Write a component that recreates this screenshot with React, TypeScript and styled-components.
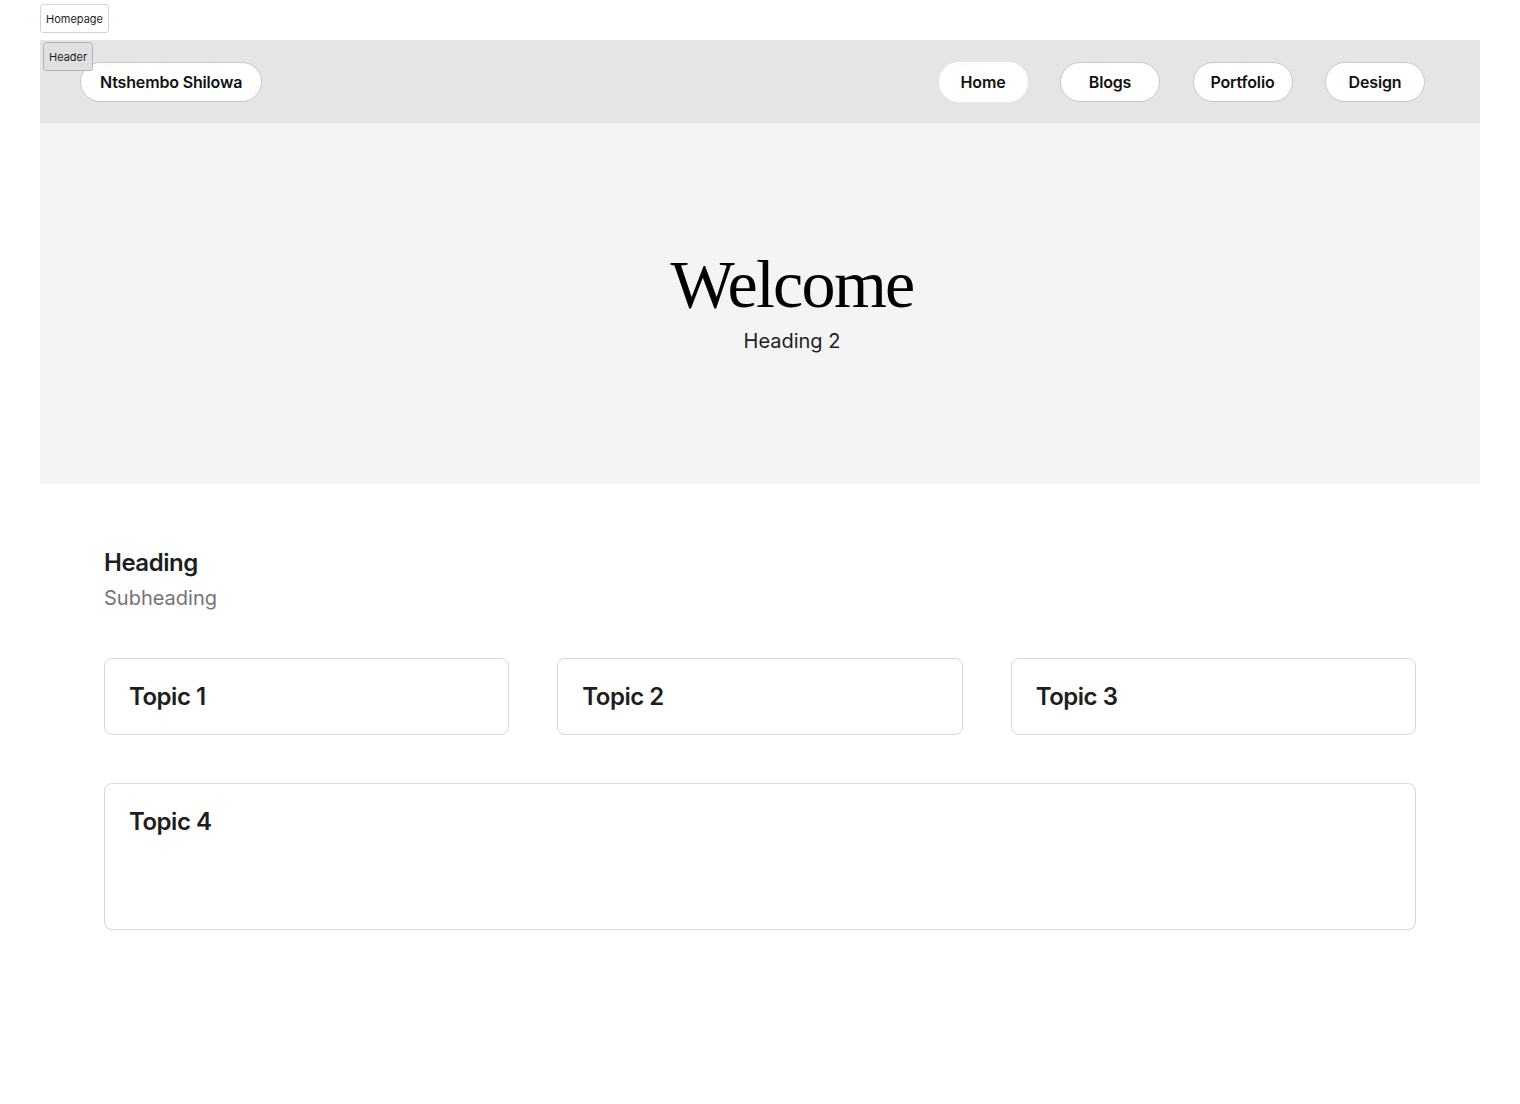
import React from "react";
import styled, { createGlobalStyle } from "styled-components";

const GlobalStyle = createGlobalStyle`
  html, body {
    margin: 0;
    padding: 0;
    background: #ffffff;
    font-family: Inter, "Noto Sans", sans-serif;
    color: #1e1e1e;
  }
`;

const Page = styled.div`
  padding: 4px 40px 40px;
`;

const FrameLabel = styled.div<{ $shaded?: boolean }>`
  display: inline-flex;
  align-items: center;
  height: 27px;
  padding: 0 5px;
  font-size: 11px;
  color: #1e1e1e;
  background: ${(p) => (p.$shaded ? "#e0e0e0" : "#ffffff")};
  border: 1px solid ${(p) => (p.$shaded ? "#b3b3b3" : "#d4d4d4")};
  border-radius: 3px;
`;

const Frame = styled.div`
  margin-top: 7px;
  width: 1440px;
`;

const Header = styled.header`
  position: relative;
  display: flex;
  align-items: center;
  justify-content: space-between;
  height: 84px;
  padding: 1px 55px 0 40px;
  background: #e5e5e5;
  border-bottom: 1px solid #ececec;
  box-sizing: border-box;
`;

const HeaderTag = styled(FrameLabel)`
  position: absolute;
  top: 2px;
  left: 3px;
`;

const Nav = styled.nav`
  display: flex;
  gap: 32.5px;
`;

const Pill = styled.div<{ $plain?: boolean; $wide?: boolean }>`
  display: flex;
  align-items: center;
  justify-content: center;
  height: 40px;
  box-sizing: border-box;
  padding: 0 ${(p) => (p.$wide ? "0" : p.$plain ? "21px" : "19px")};
  width: ${(p) => (p.$wide ? "100px" : "auto")};
  border-radius: 999px;
  background: #ffffff;
  border: 1px solid ${(p) => (p.$plain ? "transparent" : "#c8c8c8")};
  font-size: 16px;
  font-weight: 600;
  letter-spacing: -0.01em;
  color: #111111;
`;

const Hero = styled.section`
  display: flex;
  flex-direction: column;
  align-items: center;
  justify-content: center;
  height: 360px;
  padding: 0 0 6px 64px;
  box-sizing: border-box;
  background: #f4f4f4;
`;

const Title = styled.h1`
  margin: 0 0 11px;
  font-family: "Liberation Serif", "DejaVu Serif", serif;
  font-weight: 400;
  font-size: 68px;
  line-height: 1;
  letter-spacing: -0.025em;
  color: #000000;
`;

const Subtitle = styled.h2`
  margin: 0;
  font-size: 20px;
  font-weight: 400;
  line-height: 1.2;
  color: #1e1e1e;
`;

const Content = styled.section`
  display: flex;
  flex-direction: column;
  gap: 48px;
  padding: 65px 64px 160px;
`;

const Intro = styled.div`
  display: flex;
  flex-direction: column;
  gap: 8px;
`;

const Heading = styled.h3`
  margin: 0;
  font-size: 24px;
  font-weight: 600;
  line-height: 1.2;
  letter-spacing: -0.02em;
  color: #1e1e1e;
`;

const Subheading = styled.p`
  margin: 0;
  font-size: 20px;
  line-height: 1.2;
  color: #757575;
`;

const CardRow = styled.div`
  display: grid;
  grid-template-columns: repeat(3, 1fr);
  gap: 48px;
`;

const Card = styled.div<{ $tall?: boolean }>`
  box-sizing: border-box;
  min-height: ${(p) => (p.$tall ? "147px" : "0")};
  padding: 24px;
  background: #ffffff;
  border: 1px solid #d9d9d9;
  border-radius: 8px;
`;

const CardTitle = styled.div`
  font-size: 24px;
  font-weight: 600;
  line-height: 27px;
  letter-spacing: -0.02em;
  color: #1e1e1e;
`;

const navItems = [
  { label: "Home", plain: true },
  { label: "Blogs" },
  { label: "Portfolio" },
  { label: "Design" },
];

export default function App() {
  return (
    <>
      <GlobalStyle />
      <Page>
        <FrameLabel>Homepage</FrameLabel>
        <Frame>
          <Header>
            <HeaderTag $shaded>Header</HeaderTag>
            <Pill>Ntshembo Shilowa</Pill>
            <Nav>
              {navItems.map((item) => (
                <Pill key={item.label} $plain={item.plain} $wide={!item.plain}>
                  {item.label}
                </Pill>
              ))}
            </Nav>
          </Header>
          <Hero>
            <Title>Welcome</Title>
            <Subtitle>Heading 2</Subtitle>
          </Hero>
          <Content>
            <Intro>
              <Heading>Heading</Heading>
              <Subheading>Subheading</Subheading>
            </Intro>
            <CardRow>
              <Card>
                <CardTitle>Topic 1</CardTitle>
              </Card>
              <Card>
                <CardTitle>Topic 2</CardTitle>
              </Card>
              <Card>
                <CardTitle>Topic 3</CardTitle>
              </Card>
            </CardRow>
            <Card $tall>
              <CardTitle>Topic 4</CardTitle>
            </Card>
          </Content>
        </Frame>
      </Page>
    </>
  );
}
